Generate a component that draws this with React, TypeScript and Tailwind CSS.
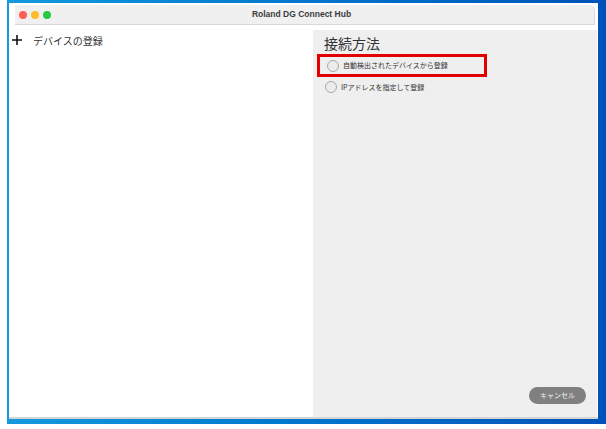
import { useState } from 'react';

const JP = { fontFamily: '"Noto Sans CJK JP", "Noto Sans", sans-serif' };

function Radio({ checked }: { checked: boolean }) {
  return (
    <span className="w-[12px] h-[12px] rounded-full border border-[#a8a8a8] bg-[#ececec] shrink-0 flex items-center justify-center">
      {checked && <span className="w-[6px] h-[6px] rounded-full bg-[#3a7bd5]" />}
    </span>
  );
}

export default function App() {
  const [method, setMethod] = useState<'auto' | 'ip' | null>(null);

  return (
    <div className="w-[606px] h-[429px] bg-white" style={JP}>
      <div className="ml-[7px] w-[599px] h-[424px] bg-gradient-to-r from-[#1599de] to-[#0052bb] pl-[2px] pt-[3px] pr-[8px] pb-[5px]">
        <div className="w-full h-full bg-white flex flex-col border-b-2 border-[#d4d4d4]">
          {/* title bar */}
          <div className="ml-[6px] mr-[3px] mt-[2px] h-[20px] shrink-0 bg-[#f0f0f0] border-b border-r border-[#d8d8d8] rounded-tr-[6px] relative flex items-center pl-[4px] gap-[4px]">
            <span className="w-[8px] h-[8px] rounded-full bg-[#fe5f57]" />
            <span className="w-[8px] h-[8px] rounded-full bg-[#febc2e]" />
            <span className="w-[8px] h-[8px] rounded-full bg-[#28c840]" />
            <span
              className="absolute left-0 right-0 text-center text-[8.5px] font-bold text-[#3c3c3c] -ml-[6px]"
              style={{ fontFamily: '"Liberation Sans", Arial, sans-serif' }}
            >
              Roland DG Connect Hub
            </span>
          </div>

          <div className="flex-1 flex min-h-0">
            {/* left pane */}
            <div className="w-[304px] shrink-0 pt-[7px] pl-[1px]">
              <div className="flex items-center h-[16px]">
                <svg width="12" height="12" viewBox="0 0 12 12" className="ml-[1px]">
                  <path d="M6 1v10M1 6h10" stroke="#111" strokeWidth="1.6" />
                </svg>
                <span className="ml-[10px] text-[10px] text-[#333]">デバイスの登録</span>
              </div>
            </div>

            {/* right pane */}
            <div className="flex-1 mt-[5px] mr-[1px] bg-[#efefef] flex flex-col pl-[4px]">
              <div className="pl-[7px] pt-[3px] h-[24px] text-[14px] leading-[20px] text-[#333]">接続方法</div>
              <button
                onClick={() => setMethod('auto')}
                className="w-[170px] h-[23px] border-[3px] border-[#e30000] flex items-center pl-[7px] gap-[4px] text-left"
              >
                <Radio checked={method === 'auto'} />
                <span className="text-[7px] text-[#333]">自動検出されたデバイスから登録</span>
              </button>
              <button
                onClick={() => setMethod('ip')}
                className="mt-[1px] h-[18px] flex items-center pl-[8px] gap-[4px] text-left"
              >
                <Radio checked={method === 'ip'} />
                <span className="text-[7px] text-[#333]">IPアドレスを指定して登録</span>
              </button>
              <div className="flex-1" />
              <div className="flex justify-end pr-[11px] pb-[13px]">
                <button className="w-[57px] h-[17px] rounded-full bg-[#808080] text-[7px] text-[#f2f2f2]">
                  キャンセル
                </button>
              </div>
            </div>
          </div>
        </div>
      </div>
    </div>
  );
}
